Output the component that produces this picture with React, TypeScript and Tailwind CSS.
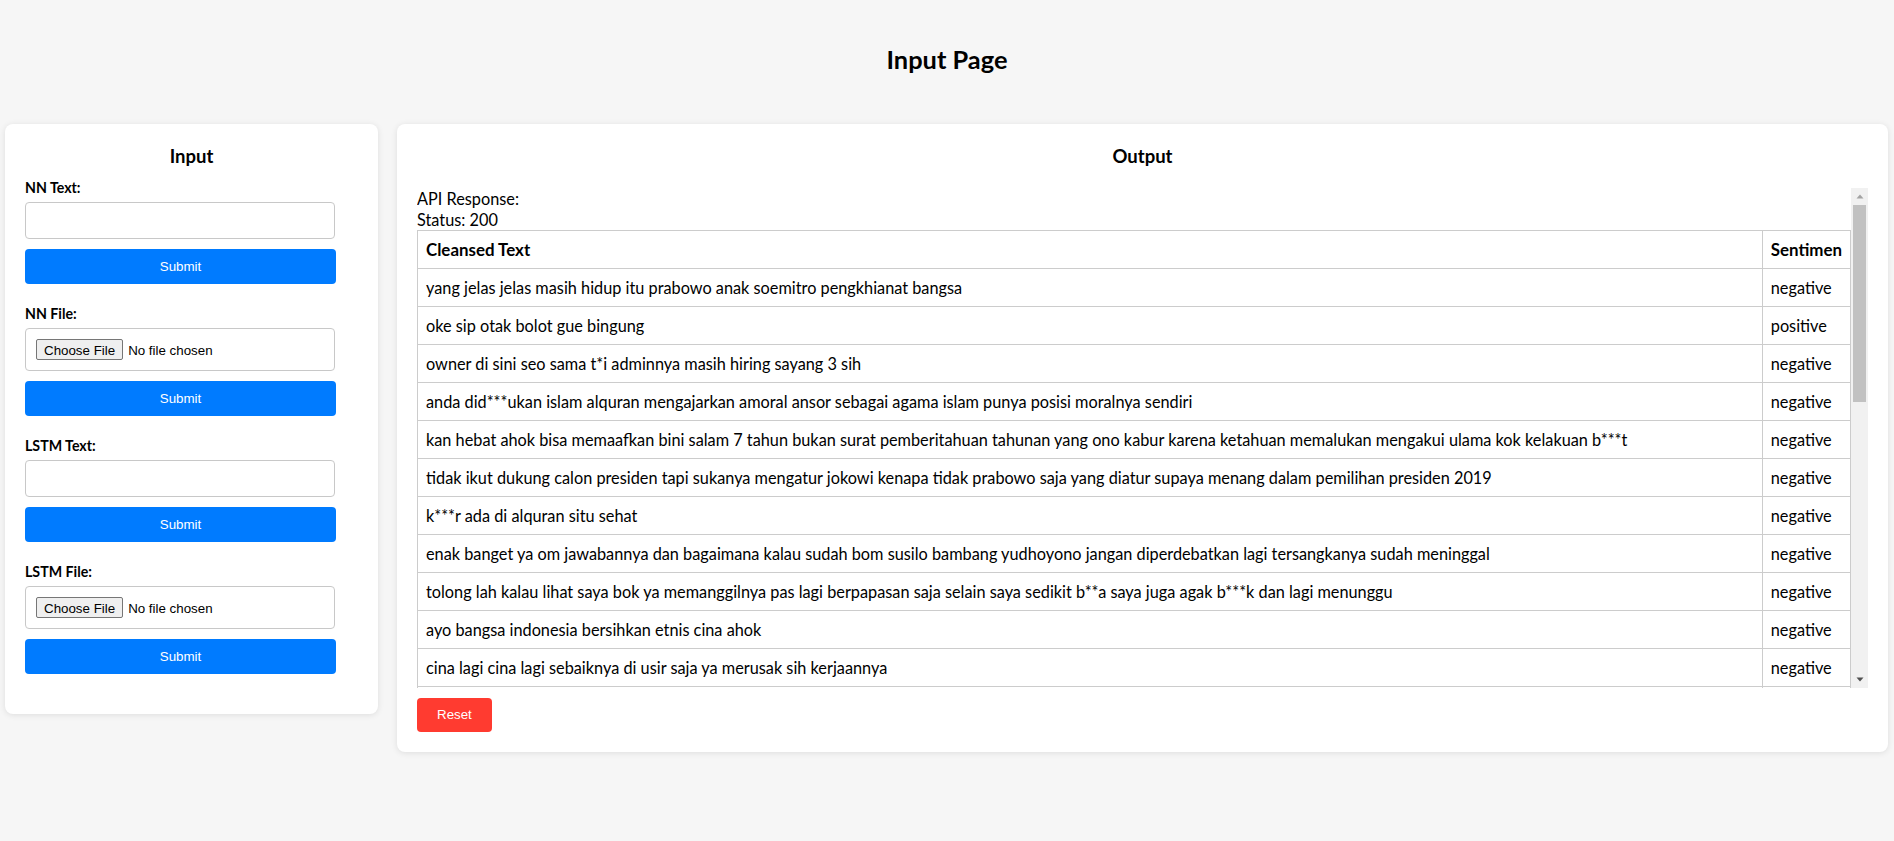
import React, { useLayoutEffect, useRef, useState } from "react";

const rows = [
  { text: "yang jelas jelas masih hidup itu prabowo anak soemitro pengkhianat bangsa", sentiment: "negative" },
  { text: "oke sip otak bolot gue bingung", sentiment: "positive" },
  { text: "owner di sini seo sama t*i adminnya masih hiring sayang 3 sih", sentiment: "negative" },
  { text: "anda did***ukan islam alquran mengajarkan amoral ansor sebagai agama islam punya posisi moralnya sendiri", sentiment: "negative" },
  { text: "kan hebat ahok bisa memaafkan bini salam 7 tahun bukan surat pemberitahuan tahunan yang ono kabur karena ketahuan memalukan mengakui ulama kok kelakuan b***t", sentiment: "negative" },
  { text: "tidak ikut dukung calon presiden tapi sukanya mengatur jokowi kenapa tidak prabowo saja yang diatur supaya menang dalam pemilihan presiden 2019", sentiment: "negative" },
  { text: "k***r ada di alquran situ sehat", sentiment: "negative" },
  { text: "enak banget ya om jawabannya dan bagaimana kalau sudah bom susilo bambang yudhoyono jangan diperdebatkan lagi tersangkanya sudah meninggal", sentiment: "negative" },
  { text: "tolong lah kalau lihat saya bok ya memanggilnya pas lagi berpapasan saja selain saya sedikit b**a saya juga agak b***k dan lagi menunggu", sentiment: "negative" },
  { text: "ayo bangsa indonesia bersihkan etnis cina ahok", sentiment: "negative" },
  { text: "cina lagi cina lagi sebaiknya di usir saja ya merusak sih kerjaannya", sentiment: "negative" },
  { text: "semoga pemilu tahun ini berjalan damai dan lancar", sentiment: "positive" },
  { text: "pelayanan di kantor ini lambat sekali padahal antrian sedikit", sentiment: "negative" },
  { text: "terima kasih atas bantuannya kemarin sangat membantu", sentiment: "positive" },
  { text: "jalanan macet terus setiap hari tidak ada solusi", sentiment: "negative" },
  { text: "makanan di warung itu enak dan harganya murah", sentiment: "positive" },
  { text: "sinyal internet di daerah saya sering hilang", sentiment: "negative" },
  { text: "acara kemarin seru banget ditunggu acara berikutnya", sentiment: "positive" },
  { text: "harga kebutuhan pokok naik terus rakyat makin susah", sentiment: "negative" },
  { text: "biasa saja tidak ada yang istimewa", sentiment: "neutral" },
  { text: "programnya bagus semoga terus dilanjutkan", sentiment: "positive" },
  { text: "sudah bayar mahal tapi hasilnya mengecewakan", sentiment: "negative" },
  { text: "mantap timnas menang lagi malam ini", sentiment: "positive" },
  { text: "banjir lagi banjir lagi tiap musim hujan", sentiment: "negative" },
  { text: "hari ini cuaca cerah cocok untuk jalan jalan", sentiment: "positive" },
  { text: "aplikasinya sering error tolong diperbaiki", sentiment: "negative" },
  { text: "rapat ditunda sampai minggu depan", sentiment: "neutral" },
  { text: "pengirimannya cepat barangnya sesuai pesanan", sentiment: "positive" },
  { text: "kecewa sama janji janji yang tidak ditepati", sentiment: "negative" },
];

function TextGroup({ label }: { label: string }) {
  const [value, setValue] = useState("");
  return (
    <div className="mb-[21px]">
      <label className="block text-[14.2px] leading-[18px] font-bold text-black mb-[5px]">{label}</label>
      <input
        type="text"
        value={value}
        onChange={(e) => setValue(e.target.value)}
        className="block w-[310px] h-[37px] px-[10px] border border-[#c8c8c8] rounded-[4px] bg-white outline-none"
      />
      <SubmitButton />
    </div>
  );
}

function FileGroup({ label }: { label: string }) {
  return (
    <div className="mb-[21px]">
      <label className="block text-[14.2px] leading-[18px] font-bold text-black mb-[5px]">{label}</label>
      <input
        type="file"
        className="block w-[310px] h-[43px] p-[10px] border border-[#c8c8c8] rounded-[4px] bg-white font-['Liberation_Sans',Arial,sans-serif] text-[13.33px] leading-[21px] text-black file:h-[21px] file:px-[7px] file:mr-[5px] file:border file:border-[#767676] file:bg-[#efefef] file:rounded-[2px] file:text-[13.33px] file:text-black"
      />
      <SubmitButton />
    </div>
  );
}

function SubmitButton() {
  return (
    <button className="block w-[311px] h-[35px] mt-[10px] bg-[#007bff] rounded-[4px] text-white text-[13.33px] font-['Liberation_Sans',Arial,sans-serif] cursor-pointer">
      Submit
    </button>
  );
}

// scroll box with a drawn classic scrollbar (the native one is hidden in headless)
function ScrollBox({ children }: { children: React.ReactNode }) {
  const ref = useRef<HTMLDivElement>(null);
  const trackRef = useRef<HTMLDivElement>(null);
  const [thumb, setThumb] = useState({ top: 0, height: 196 });

  const update = () => {
    const el = ref.current;
    const track = trackRef.current;
    if (!el || !track) return;
    const th = track.clientHeight;
    const h = Math.max(20, (th * el.clientHeight) / el.scrollHeight);
    const max = el.scrollHeight - el.clientHeight;
    const top = max > 0 ? ((th - h) * el.scrollTop) / max : 0;
    setThumb({ top, height: h });
  };

  useLayoutEffect(update, []);

  const atTop = thumb.top <= 0;

  return (
    <div className="flex h-[500px]">
      <div
        ref={ref}
        onScroll={update}
        className="flex-1 min-w-0 overflow-y-auto [scrollbar-width:none] [&::-webkit-scrollbar]:hidden"
      >
        {children}
      </div>
      <div className="w-[17px] shrink-0 flex flex-col bg-[#f1f1f1]">
        <button
          className="h-[17px] shrink-0 flex items-center justify-center"
          onClick={() => ref.current?.scrollBy({ top: -40 })}
        >
          <svg width="8" height="5" viewBox="0 0 8 5">
            <polygon points="4,0.5 7.5,4.5 0.5,4.5" fill={atTop ? "#a3a3a3" : "#505050"} />
          </svg>
        </button>
        <div ref={trackRef} className="flex-1">
          <div
            className="mx-[2px] bg-[#c1c1c1]"
            style={{ marginTop: thumb.top, height: thumb.height }}
          />
        </div>
        <button
          className="h-[17px] shrink-0 flex items-center justify-center"
          onClick={() => ref.current?.scrollBy({ top: 40 })}
        >
          <svg width="8" height="5" viewBox="0 0 8 5">
            <polygon points="0.5,0.5 7.5,0.5 4,4.5" fill="#505050" />
          </svg>
        </button>
      </div>
    </div>
  );
}

export default function App() {
  return (
    <div className="min-h-[841px] bg-[#f6f6f6] font-['Lato',sans-serif] text-black pt-[44px]">
      <h1 className="text-center text-[25.4px] leading-[30px] font-bold mb-[50px]">Input Page</h1>
      <div className="flex items-start gap-[19px] pl-[5px] pr-[6px]">
        {/* Input card */}
        <div className="w-[373px] shrink-0 bg-white rounded-[8px] shadow-[0_1px_6px_rgba(0,0,0,0.1)] pt-[21px] pb-[19px] px-[20px]">
          <h3 className="text-center text-[18.5px] leading-[22px] font-bold mb-[12px]">Input</h3>
          <TextGroup label="NN Text:" />
          <FileGroup label="NN File:" />
          <TextGroup label="LSTM Text:" />
          <FileGroup label="LSTM File:" />
        </div>

        {/* Output card */}
        <div className="flex-1 bg-white rounded-[8px] shadow-[0_1px_6px_rgba(0,0,0,0.1)] pt-[21px] pb-[20px] pl-[20px] pr-[20px]">
          <h3 className="text-center text-[18.5px] leading-[22px] font-bold mb-[21px]">Output</h3>
          <ScrollBox>
            <div className="text-[16.3px] leading-[21px]">
              <div>API Response:</div>
              <div>Status: 200</div>
              <table className="w-full border-collapse">
                <thead>
                  <tr>
                    <th className="border border-[#cccccc] p-[8px] text-left font-bold text-[16.9px]">Cleansed Text</th>
                    <th className="w-px border border-[#cccccc] p-[8px] text-left font-bold text-[16.9px] whitespace-nowrap">Sentimen</th>
                  </tr>
                </thead>
                <tbody>
                  {rows.map((r, i) => (
                    <tr key={i}>
                      <td className="border border-[#cccccc] p-[8px]">{r.text}</td>
                      <td className="border border-[#cccccc] p-[8px] whitespace-nowrap">{r.sentiment}</td>
                    </tr>
                  ))}
                </tbody>
              </table>
            </div>
          </ScrollBox>
          <button className="mt-[10px] h-[34px] px-[20px] bg-[#ff3b30] rounded-[4px] text-white text-[13.33px] font-['Liberation_Sans',Arial,sans-serif] cursor-pointer">
            Reset
          </button>
        </div>
      </div>
    </div>
  );
}
